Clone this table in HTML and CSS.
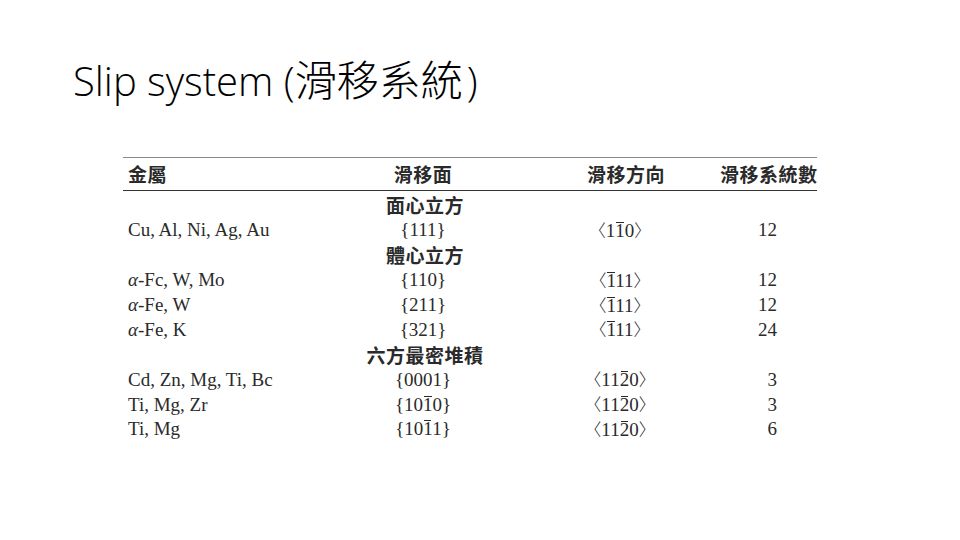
FILE: index.html
```html
<!DOCTYPE html>
<html>
<head>
<meta charset="utf-8">
<link rel="stylesheet" href="styles.css">
</head>
<body>
<h1 class="title">Slip system (<span class="cjk-title">滑移系統</span>)</h1>
<div class="table">
  <div class="row head">
    <div class="c1 cjk">金屬</div>
    <div class="c2 cjk">滑移面</div>
    <div class="c3 cjk h3">滑移方向</div>
    <div class="c4 cjk h4">滑移系統數</div>
  </div>
  <div class="body">
    <div class="row"><div class="c1"></div><div class="c2 cjk group">面心立方</div><div class="c3"></div><div class="c4"></div></div>
    <div class="row"><div class="c1">Cu, Al, Ni, Ag, Au</div><div class="c2">{111}</div><div class="c3"><span class="ab">〈</span>1<span class="bar">1</span>0<span class="ab">〉</span></div><div class="c4">12</div></div>
    <div class="row"><div class="c1"></div><div class="c2 cjk group">體心立方</div><div class="c3"></div><div class="c4"></div></div>
    <div class="row"><div class="c1"><i class="al">α</i>-Fc, W, Mo</div><div class="c2">{110}</div><div class="c3"><span class="ab">〈</span><span class="bar">1</span>11<span class="ab">〉</span></div><div class="c4">12</div></div>
    <div class="row"><div class="c1"><i class="al">α</i>-Fe, W</div><div class="c2">{211}</div><div class="c3"><span class="ab">〈</span><span class="bar">1</span>11<span class="ab">〉</span></div><div class="c4">12</div></div>
    <div class="row"><div class="c1"><i class="al">α</i>-Fe, K</div><div class="c2">{321}</div><div class="c3"><span class="ab">〈</span><span class="bar">1</span>11<span class="ab">〉</span></div><div class="c4">24</div></div>
    <div class="row"><div class="c1"></div><div class="c2 cjk group">六方最密堆積</div><div class="c3"></div><div class="c4"></div></div>
    <div class="row"><div class="c1">Cd, Zn, Mg, Ti, Bc</div><div class="c2">{0001}</div><div class="c3"><span class="ab">〈</span>11<span class="bar">2</span>0<span class="ab">〉</span></div><div class="c4">3</div></div>
    <div class="row"><div class="c1">Ti, Mg, Zr</div><div class="c2">{10<span class="bar">1</span>0}</div><div class="c3"><span class="ab">〈</span>11<span class="bar">2</span>0<span class="ab">〉</span></div><div class="c4">3</div></div>
    <div class="row"><div class="c1">Ti, Mg</div><div class="c2">{10<span class="bar">1</span>1}</div><div class="c3"><span class="ab">〈</span>11<span class="bar">2</span>0<span class="ab">〉</span></div><div class="c4">6</div></div>
  </div>
</div>
</body>
</html>
```
FILE: styles.css
```css
html, body {
  margin: 0;
  padding: 0;
  background: #ffffff;
  width: 960px;
  height: 540px;
  overflow: hidden;
}
.title {
  margin: 0;
  padding: 52px 0 0 73px;
  font-family: "Open Sans", "Noto Sans CJK TC", sans-serif;
  font-weight: 300;
  font-size: 40px;
  line-height: 52px;
  color: #000;
  letter-spacing: 0;
}
.cjk-title {
  font-family: "Noto Sans CJK TC", sans-serif;
  font-weight: 300;
  font-size: 42px;
  margin-right: 4px;
}
.table {
  margin: 50px 0 0 123px;
  width: 694px;
  font-family: "Liberation Serif", "Noto Sans CJK TC", serif;
  font-size: 19px;
  color: #2a2a2a;
}
.row {
  display: grid;
  grid-template-columns: 225px 150px 222px 97px;
  height: 24.9px;
  align-items: center;
  white-space: nowrap;
  line-height: 20px;
}
.head {
  height: 32px;
  border-top: 1px solid #8a8a8a;
  border-bottom: 1.5px solid #333;
}
.body {
  padding-top: 2px;
}
.c1 { padding-left: 5px; }
.c2 { text-align: center; }
.c3 { text-align: center; padding-left: 22px; }
.c4 { text-align: right; padding-right: 40px; }
.h3 { padding-left: 34px; }
.h4 { padding-right: 0; }
.cjk {
  font-family: "Noto Sans CJK TC", serif;
  font-weight: 700;
  font-size: 19px;
  letter-spacing: 0.5px;
}
.group { margin-left: 4px; }
.bar { position: relative; }
.bar::before {
  content: "";
  position: absolute;
  left: 1px;
  right: 1px;
  top: 2px;
  height: 1px;
  background: currentColor;
}
.ab {
  font-family: "Noto Sans CJK TC", serif;
  font-weight: 300;
  font-size: 17px;
}
.al { font-style: italic; }
```
